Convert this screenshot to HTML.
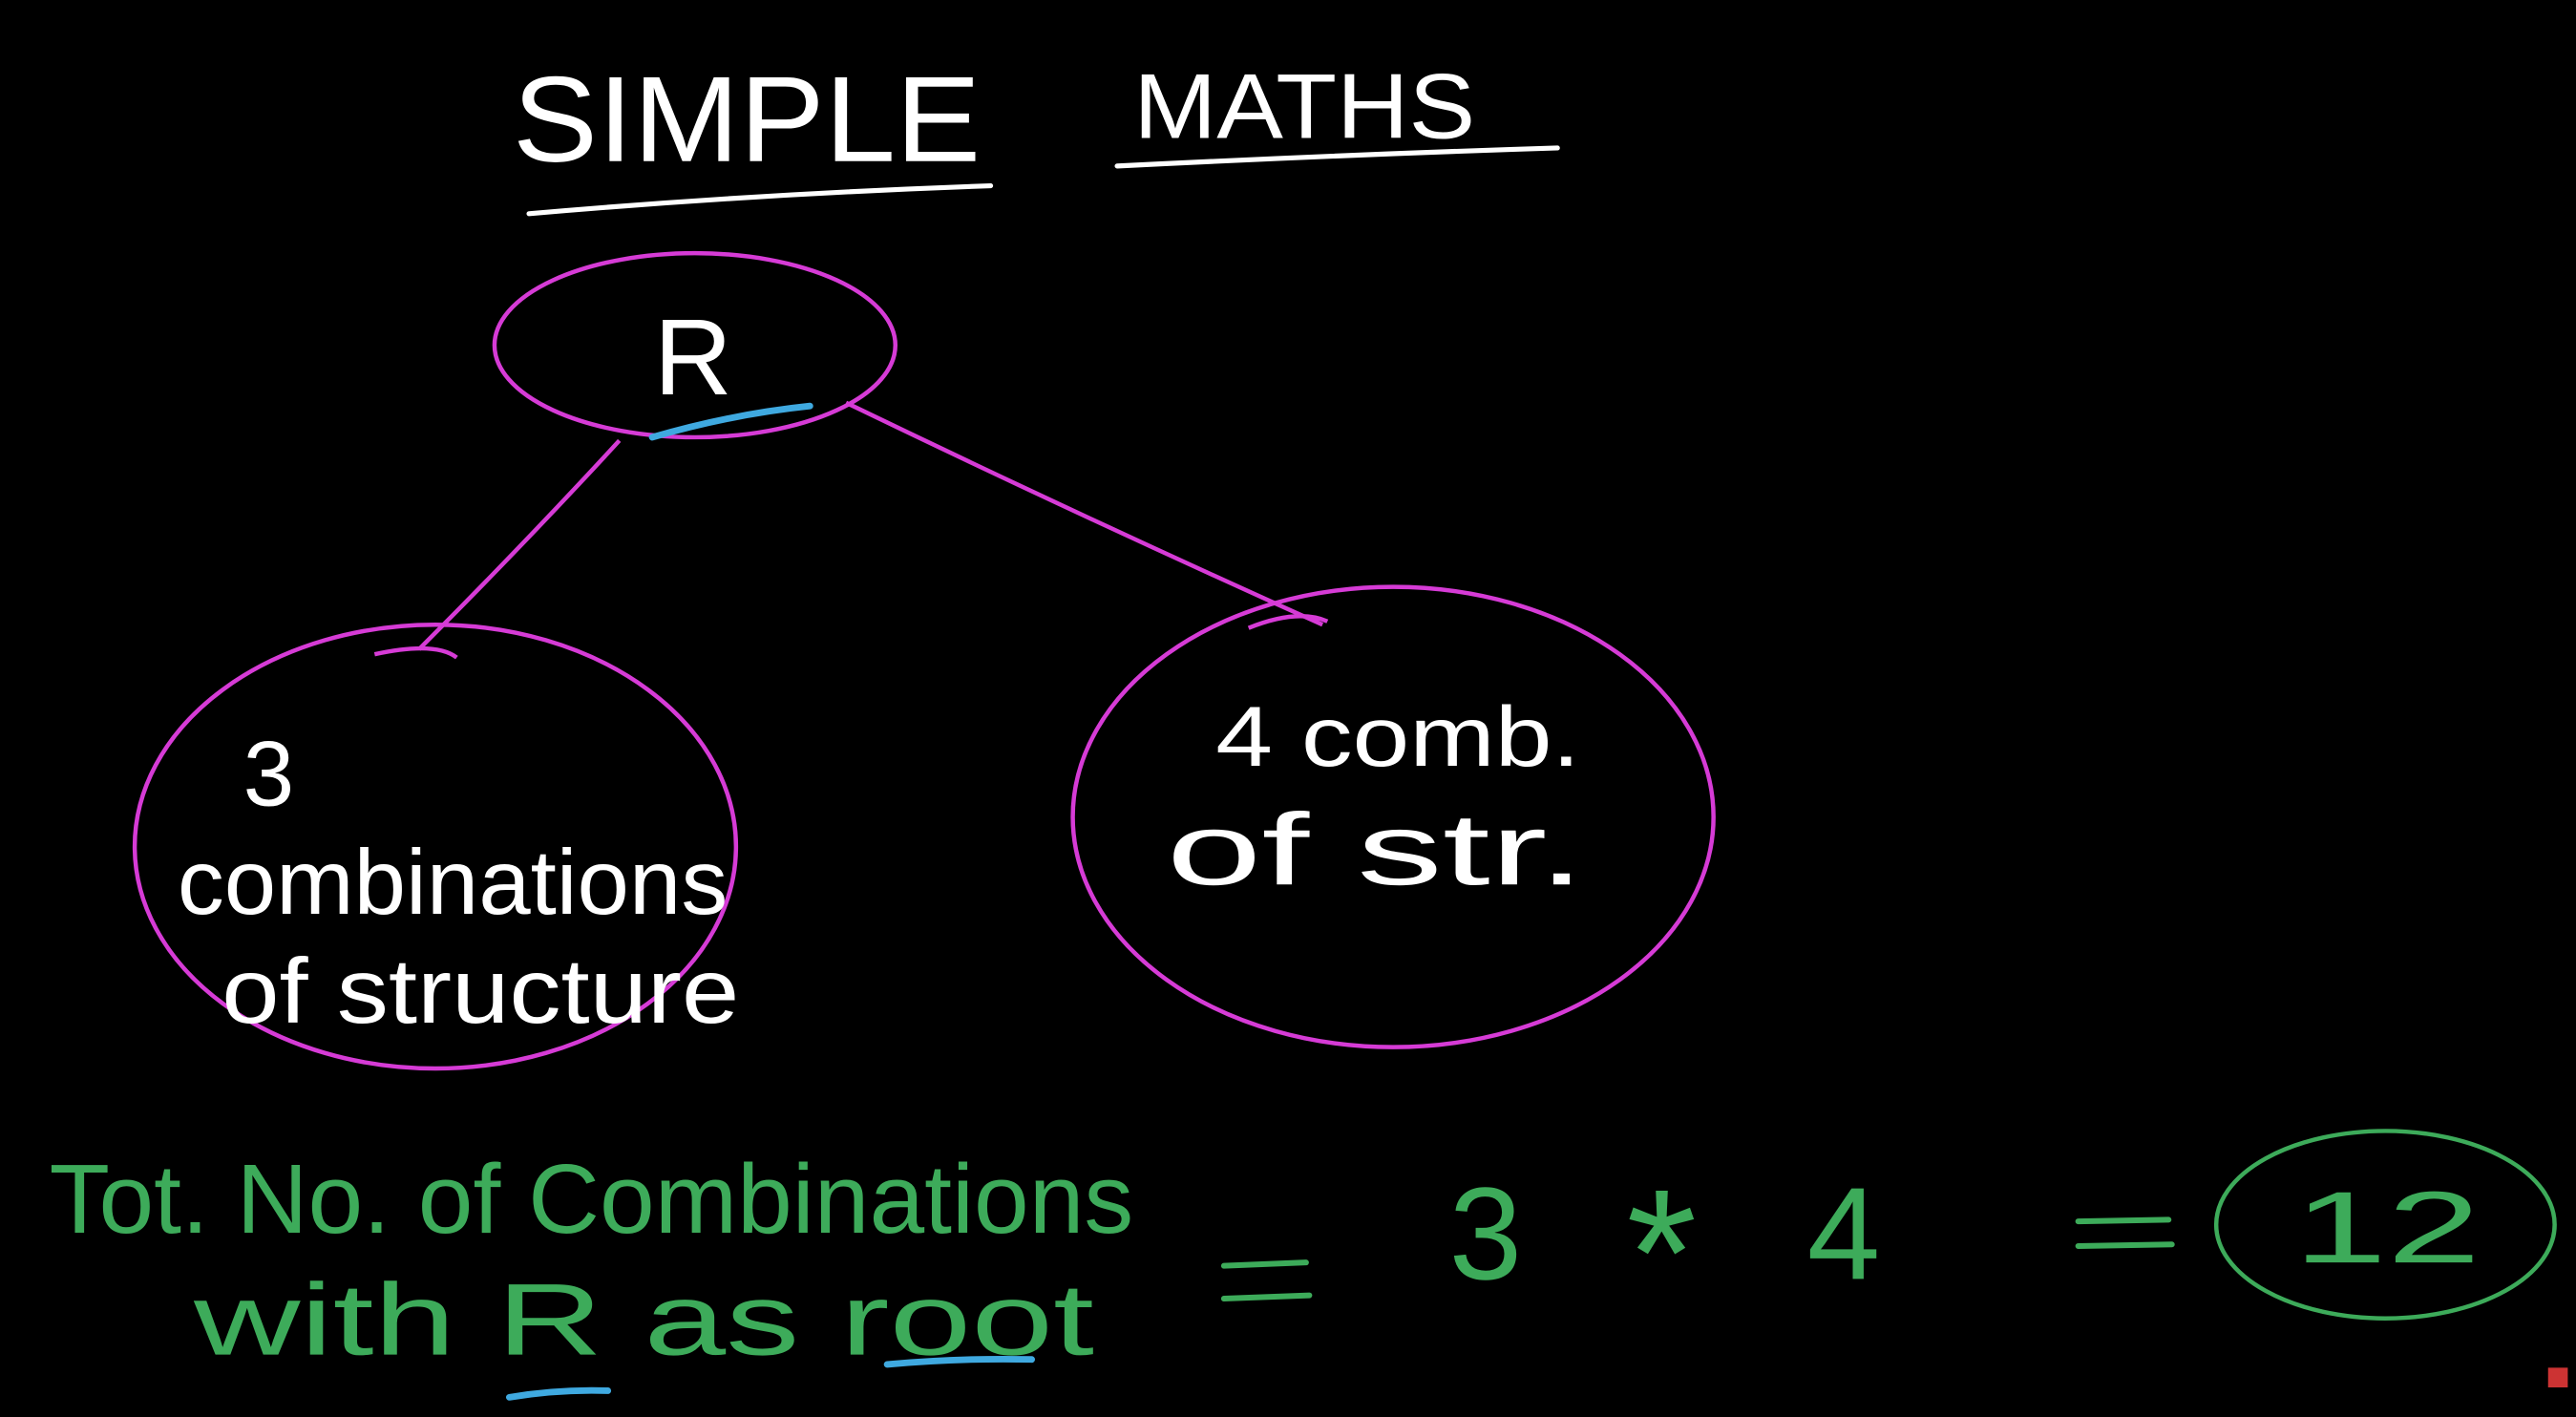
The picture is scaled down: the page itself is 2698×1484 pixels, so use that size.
<!DOCTYPE html>
<html><head><meta charset="utf-8"><style>
html,body{margin:0;padding:0;background:#000;width:2698px;height:1484px;overflow:hidden}
svg{display:block}
text{font-family:"Liberation Sans","DejaVu Sans",sans-serif}
</style></head><body>
<svg width="2698" height="1484" viewBox="0 0 1568 862" preserveAspectRatio="none" xmlns="http://www.w3.org/2000/svg">
<rect width="1568" height="862" fill="#000"/>
<g fill="#fff">
<text x="312" y="98" font-size="74" textLength="285" lengthAdjust="spacingAndGlyphs">SIMPLE</text>
<text x="690" y="84" font-size="56" textLength="208" lengthAdjust="spacingAndGlyphs">MATHS</text>
</g>
<g stroke="#fff" stroke-width="3" fill="none" stroke-linecap="round">
<path d="M322 130 Q460 118 603 113"/>
<path d="M680 101 Q820 94 948 90"/>
</g>
<g stroke="#d63bd6" stroke-width="2.6" fill="none">
<ellipse cx="423" cy="210" rx="122" ry="56"/>
<path d="M377 268 Q320 330 255 395"/>
<path d="M515 245 Q660 315 805 380"/>
<path d="M228 398 Q265 390 278 400"/>
<ellipse cx="265" cy="515" rx="183" ry="135"/>
<ellipse cx="848" cy="497" rx="195" ry="140"/>
<path d="M760 382 Q790 370 808 378"/>
</g>
<text x="398" y="240" font-size="66" fill="#fff">R</text>
<g stroke="#3fa9e0" stroke-width="4" stroke-linecap="round" fill="none">
<path d="M397 266 Q445 252 493 247"/>
<path d="M310 850 Q340 845 370 846"/>
<path d="M540 830 Q585 826 628 827"/>
</g>
<g fill="#fff">
<text x="148" y="490" font-size="56">3</text>
<text x="108" y="556" font-size="56" textLength="335" lengthAdjust="spacingAndGlyphs">combinations</text>
<text x="135" y="622" font-size="56" textLength="315" lengthAdjust="spacingAndGlyphs">of structure</text>
<text x="740" y="466" font-size="52" textLength="222" lengthAdjust="spacingAndGlyphs">4 comb.</text>
<text x="710" y="538" font-size="62" textLength="255" lengthAdjust="spacingAndGlyphs">of str.</text>
</g>
<g fill="#3dab5a">
<text x="30" y="750" font-size="60" textLength="660" lengthAdjust="spacingAndGlyphs">Tot. No. of Combinations</text>
<text x="118" y="824" font-size="62" textLength="548" lengthAdjust="spacingAndGlyphs">with R as root</text>
<text x="882" y="778" font-size="80">3</text>
<text x="990" y="800" font-size="110">*</text>
<text x="1100" y="778" font-size="80">4</text>
<text x="1396" y="768" font-size="62" textLength="114" lengthAdjust="spacingAndGlyphs">12</text>
</g>
<g stroke="#3dab5a" stroke-width="3.5" stroke-linecap="round" fill="none">
<path d="M745 770 L795 768"/>
<path d="M745 790 L797 788"/>
<path d="M1265 743 L1320 742"/>
<path d="M1265 758 L1322 757"/>
</g>
<ellipse cx="1452" cy="745" rx="103" ry="57" fill="none" stroke="#3dab5a" stroke-width="2.6"/>
<rect x="1551" y="832" width="12" height="12" fill="#c33"/>
</svg>
</body></html>
